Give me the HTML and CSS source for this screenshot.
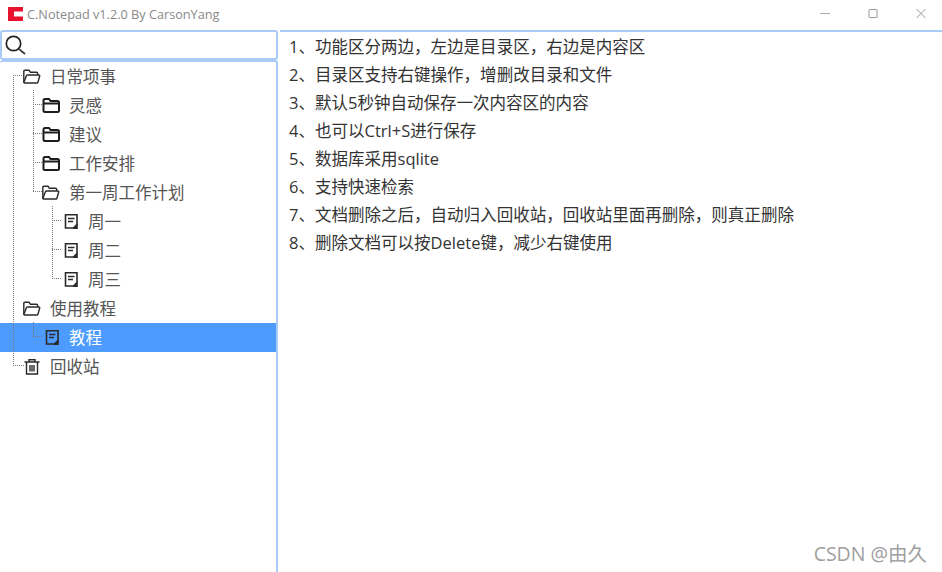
FILE: index.html
```html
<!DOCTYPE html>
<html lang="zh">
<head>
<meta charset="utf-8">
<title>C.Notepad</title>
<link rel="stylesheet" href="styles.css">
</head>
<body>
<div class="window">
  <header class="titlebar">
    <svg class="logo" width="15" height="14" viewBox="0 0 15 14"><path fill="#e8132f" d="M0 0H15V4.500H6V9.500H15V14H0Z"/></svg>
    <span class="title">C.Notepad v1.2.0 By CarsonYang</span>
    <div class="controls">
      <svg width="10" height="10" viewBox="0 0 10 10"><path d="M0 4.500H10" stroke="#aaa" fill="none"/></svg>
      <svg width="10" height="10" viewBox="0 0 10 10"><rect x="1" y=".5" width="8" height="8" rx=".5" stroke="#999" fill="none"/></svg>
      <svg width="10" height="10" viewBox="0 0 10 10"><path d="M.5 0L9.500 9M9.500 0L.5 9" stroke="#999" fill="none"/></svg>
    </div>
  </header>
  <main class="panes">
    <aside class="side">
      <div class="search">
        <svg width="24" height="22" viewBox="0 0 24 22"><circle cx="10.500" cy="9.500" r="7.200" stroke="#222" stroke-width="1.700" fill="none"/><path d="M15.800 14.800L22 20" stroke="#333" stroke-width="1.700" fill="none"/></svg>
      </div>
      <div class="tree">
        <svg class="guides" width="276" height="320" viewBox="0 0 276 320">
          <path d="M13.500 14V304M13 14.500H23M13 304.500H24M33.500 29V130M33 43.500H43M33 72.500H43M33 101.500H43M33 130.500H43M52.500 145V217M52 159.500H62M52 188.500H62M52 217.500H62M33.500 261V275M33 275.500H43" fill="none" stroke="#777" stroke-dasharray="1 1"/>
        </svg>
        <div class="row l0"><svg class="ic" width="18" height="15" viewBox="0 0 18 15"><use href="#open"/></svg><span>日常项事</span></div>
        <div class="row l1"><svg class="ic" width="18" height="15" viewBox="0 0 18 15"><use href="#closed"/></svg><span>灵感</span></div>
        <div class="row l1"><svg class="ic" width="18" height="15" viewBox="0 0 18 15"><use href="#closed"/></svg><span>建议</span></div>
        <div class="row l1"><svg class="ic" width="18" height="15" viewBox="0 0 18 15"><use href="#closed"/></svg><span>工作安排</span></div>
        <div class="row l1"><svg class="ic" width="18" height="15" viewBox="0 0 18 15"><use href="#open"/></svg><span>第一周工作计划</span></div>
        <div class="row l2"><svg class="ic" width="18" height="15" viewBox="0 0 18 15"><use href="#doc"/></svg><span>周一</span></div>
        <div class="row l2"><svg class="ic" width="18" height="15" viewBox="0 0 18 15"><use href="#doc"/></svg><span>周二</span></div>
        <div class="row l2"><svg class="ic" width="18" height="15" viewBox="0 0 18 15"><use href="#doc"/></svg><span>周三</span></div>
        <div class="row l0"><svg class="ic" width="18" height="15" viewBox="0 0 18 15"><use href="#open"/></svg><span>使用教程</span></div>
        <div class="row l1 selected"><svg class="ic" width="18" height="15" viewBox="0 0 18 15"><use href="#doc"/></svg><span>教程</span></div>
        <div class="row l0"><svg class="ic" width="18" height="15" viewBox="0 0 18 15"><use href="#trash"/></svg><span>回收站</span></div>
      </div>
    </aside>
    <section class="content">
      <p>1、功能区分两边，左边是目录区，右边是内容区</p>
      <p>2、目录区支持右键操作，增删改目录和文件</p>
      <p>3、默认5秒钟自动保存一次内容区的内容</p>
      <p>4、也可以Ctrl+S进行保存</p>
      <p>5、数据库采用sqlite</p>
      <p>6、支持快速检索</p>
      <p>7、文档删除之后，自动归入回收站，回收站里面再删除，则真正删除</p>
      <p>8、删除文档可以按Delete键，减少右键使用</p>
    </section>
  </main>
  <div class="watermark">CSDN @由久</div>
</div>
<svg class="defs" width="0" height="0">
  <defs>
    <g id="closed" fill="none" stroke="#1c1c1c" stroke-width="2"><path d="M1.500 12.500V2.500Q1.500 1 3 1H7L8.500 3H15.500Q17 3 17 4.500V12.500Q17 14 15.500 14H3Q1.500 14 1.500 12.500Z"/><path d="M1.500 5.500H17"/></g>
    <g id="open" fill="none" stroke="#2a2a2a" stroke-width="1.400"><path d="M.8 13V2.500Q.8 1.300 2 1.300H6L7.500 3.300H13.500Q14.700 3.300 14.700 4.500V6"/><path d="M.8 13.500L3.500 6.500Q3.800 6 4.500 6H15.800Q17 6 16.700 7L15 13Q14.700 14 14 14H1.500Z"/></g>
    <g id="doc" fill="none" stroke="#2a2a2a" stroke-width="1.600"><path d="M4.500 .8H16V10.500L12.500 14H4.500Z"/><path d="M7 4.500H13.500M7 7.500H12"/><path d="M11.500 15L16.800 9.800V15Z" fill="#2a2a2a" stroke="none"/></g>
    <g id="trash" fill="none" stroke="#2a2a2a" stroke-width="1.400"><path d="M1.500 3H16.500M6 3V.7H12V3M3.500 3V15H14.500V3M7 6V12.500M9 6V12.500M11 6V12.500"/></g>
  </defs>
</svg>
</body>
</html>
```
FILE: styles.css
```css
* { box-sizing: border-box; }
html, body { margin: 0; height: 100%; }
body {
  background: #fff;
  font-family: "Open Sans", "Noto Sans CJK SC", sans-serif;
  overflow: hidden;
}
.defs { position: absolute; }
.window {
  position: relative;
  width: 942px;
  height: 572px;
  display: flex;
  flex-direction: column;
}
.titlebar {
  height: 30px;
  flex: none;
  display: flex;
  align-items: center;
  padding: 0 16px 3px 8px;
}
.logo { margin-right: 4px; }
.title {
  font-size: 12.7px;
  color: #8a8a8a;
}
.controls {
  margin-left: auto;
  display: flex;
  gap: 38px;
}
.panes { flex: 1; display: flex; min-height: 0; }
.side {
  width: 278px;
  flex: none;
  display: flex;
  flex-direction: column;
}
.search {
  height: 30px;
  flex: none;
  display: flex;
  align-items: center;
  padding: 0 3px 0 1px;
  border: 2px solid #a9cbf5;
  border-radius: 3px;
  margin-right: 0;
}
.tree {
  position: relative;
  flex: 1;
  border: solid #a9cbf5;
  border-width: 2px 2px 0 0;
  border-radius: 3px 3px 0 0;
}
.guides {
  position: absolute;
  left: 0;
  top: -1px;
  z-index: 1;
  pointer-events: none;
}
.row {
  height: 29px;
  display: flex;
  align-items: center;
  gap: 9px;
  padding-bottom: 1px;
  font-size: 16.5px;
  color: #555;
}
.ic { flex: none; overflow: visible; }
.l0 { padding-left: 23px; }
.l1 { padding-left: 42px; }
.l2 { padding-left: 61px; }
.selected {
  background: #4d9bff;
  color: #fff;
}
.content {
  flex: 1;
  margin-left: 2px;
  border-top: 2px solid #a9cbf5;
  padding: 1px 0 0 9px;
  color: #333;
  font-size: 16.52px;
}
.content p {
  margin: 0;
  height: 28px;
  line-height: 28px;
  white-space: nowrap;
}
.watermark {
  position: absolute;
  right: 15px;
  bottom: 5px;
  font-size: 19.500px;
  color: #a0a0a0;
}
```
